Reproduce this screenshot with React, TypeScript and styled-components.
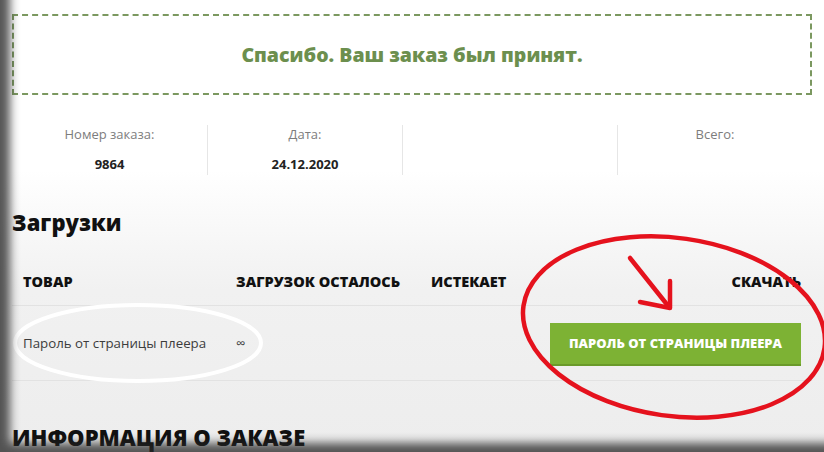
import styled, { createGlobalStyle } from "styled-components"

const Global = createGlobalStyle`
    html, body {
        margin: 0;
        padding: 0;
        background: #ffffff;
    }
    body {
        font-family: "Open Sans", "Liberation Sans", sans-serif;
        color: #1a1a1a;
    }
`

const Frame = styled.div`
    position: relative;
    width: 824px;
    height: 452px;
    overflow: hidden;
    box-sizing: border-box;
    padding: 14px 12px 0 12px;
    background: linear-gradient(to bottom, #ffffff 0px, #ffffff 170px, #f1f1f1 290px, #ededed 100%);
`

// the blurred dark edge of the screenshot, lies over everything
const Vignette = styled.div`
    position: absolute;
    inset: 0;
    pointer-events: none;
    box-shadow: inset 13px -12px 10px -3px rgba(40, 40, 40, 0.78);
    z-index: 3;
`

const Notice = styled.div`
    width: 800px;
    height: 81px;
    box-sizing: border-box;
    border: 2px dashed #7b9860;
    display: flex;
    align-items: center;
    justify-content: center;
    color: #6c8f4e;
    font-size: 19.5px;
    font-weight: 800;
`

const Overview = styled.ul`
    list-style: none;
    margin: 30px 0 0;
    padding: 0;
    width: 800px;
    display: grid;
    grid-template-columns: 195px 195px 215px 195px;
`

const OverviewItem = styled.li<{ $first?: boolean }>`
    height: 50px;
    display: flex;
    flex-direction: column;
    align-items: center;
    border-left: ${p => (p.$first ? "none" : "1px solid #e6e6e6")};
`

const Label = styled.span`
    font-size: 13px;
    line-height: 18px;
    color: #7d7d7d;
`

const Value = styled.strong`
    margin-top: 12px;
    font-size: 13px;
    line-height: 18px;
    color: #222;
`

const SectionTitle = styled.h2`
    margin: 32px 0 0;
    font-size: 22px;
    line-height: 30px;
    font-weight: 800;
    color: #111;
`

const Table = styled.div`
    width: 800px;
    margin-top: 20px;
`

const Row = styled.div<{ $head?: boolean }>`
    display: grid;
    grid-template-columns: 213px 195px 118px 1fr;
    align-items: center;
    height: ${p => (p.$head ? "48px" : "74px")};
    border-bottom: 1px solid #e2e2e2;
`

const HeadCell = styled.div<{ $right?: boolean }>`
    padding: 0 11px;
    font-size: 14.5px;
    font-weight: 800;
    text-transform: uppercase;
    white-space: nowrap;
    color: #111;
    text-align: ${p => (p.$right ? "right" : "left")};
`

const Cell = styled.div<{ $right?: boolean }>`
    padding: 0 11px;
    font-size: 13.3px;
    color: #3c3c3c;
    display: flex;
    justify-content: ${p => (p.$right ? "flex-end" : "flex-start")};
`

const DownloadButton = styled.button`
    width: 251px;
    height: 41px;
    border: none;
    background-color: #7db234;
    box-shadow: 0 2px 0 #6a9a2a;
    color: #fff;
    font-family: inherit;
    font-size: 13px;
    font-weight: 800;
    text-transform: uppercase;
    white-space: nowrap;
    cursor: pointer;
`

const BottomTitle = styled(SectionTitle)`
    margin-top: 41px;
    text-transform: uppercase;
`

const Marks = styled.svg`
    position: absolute;
    left: 0;
    top: 0;
    pointer-events: none;
    z-index: 2;
`

export default function App() {
    return (
        <Frame>
            <Global />
            <Notice>Спасибо. Ваш заказ был принят.</Notice>

            <Overview>
                <OverviewItem $first>
                    <Label>Номер заказа:</Label>
                    <Value>9864</Value>
                </OverviewItem>
                <OverviewItem>
                    <Label>Дата:</Label>
                    <Value>24.12.2020</Value>
                </OverviewItem>
                <OverviewItem />
                <OverviewItem>
                    <Label>Всего:</Label>
                </OverviewItem>
            </Overview>

            <SectionTitle>Загрузки</SectionTitle>

            <Table>
                <Row $head>
                    <HeadCell>Товар</HeadCell>
                    <HeadCell>Загрузок осталось</HeadCell>
                    <HeadCell>Истекает</HeadCell>
                    <HeadCell $right>Скачать</HeadCell>
                </Row>
                <Row>
                    <Cell>Пароль от страницы плеера</Cell>
                    <Cell>∞</Cell>
                    <Cell />
                    <Cell $right>
                        <DownloadButton>Пароль от страницы плеера</DownloadButton>
                    </Cell>
                </Row>
            </Table>

            <BottomTitle>Информация о заказе</BottomTitle>

            <Marks width="824" height="452" viewBox="0 0 824 452">
                <ellipse cx="138" cy="343" rx="123" ry="38" fill="none" stroke="#ffffff" strokeWidth="4" />
                <ellipse
                    cx="674"
                    cy="327"
                    rx="152"
                    ry="89"
                    fill="none"
                    stroke="#e5121d"
                    strokeWidth="4.5"
                    transform="rotate(8 674 327)"
                />
                <g stroke="#e5121d" strokeWidth="4.5" strokeLinecap="round" fill="none">
                    <path d="M630 258 L669 307" />
                    <path d="M670 281 L670 308 L640 302" strokeLinejoin="round" />
                </g>
            </Marks>
            <Vignette />
        </Frame>
    )
}
